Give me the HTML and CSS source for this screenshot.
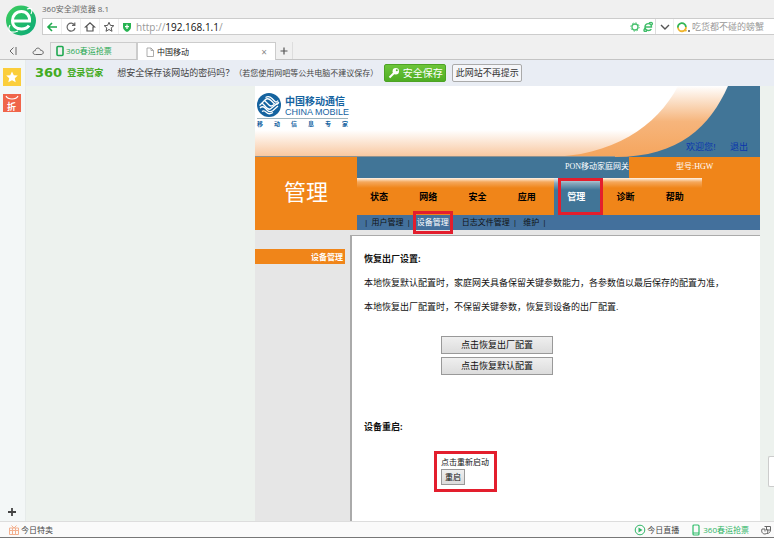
FILE: index.html
```
<!DOCTYPE html>
<html lang="zh-CN">
<head>
<meta charset="utf-8">
<title>中国移动</title>
<link rel="stylesheet" href="styles.css">
</head>
<body>
<header class="chrome">
  <svg class="brand" viewBox="0 0 42 42" aria-hidden="true">
    <defs><linearGradient id="g" x1="0" y1="0" x2="1" y2="1"><stop offset="0" stop-color="#3fcf5c"/><stop offset="1" stop-color="#08a878"/></linearGradient></defs>
    <circle cx="21" cy="20.500" r="15" fill="url(#g)"/>
    <path d="M13 21H29.500C30 15.500 26.500 11.500 21.500 11.500C16 11.500 12.500 15.500 12.500 20.500C12.500 26 16.500 29 21.500 29C25 29 27.500 28 29 25.500" fill="none" stroke="#fff" stroke-width="3"/>
    <path d="M10 25C7 31 10 34 18 31M27 9C32 7 33 10 31 14" fill="none" stroke="#fff" stroke-width="1.200"/>
  </svg>
  <div class="chrome-main">
    <div class="app-title">360安全浏览器 8.1</div>
    <div class="address">
      <button class="tool" aria-label="后退"><svg viewBox="0 0 12 12"><path d="M11 6H2M6 2L2 6L6 10" stroke="#1ea94c" stroke-width="1.600"/></svg></button>
      <button class="tool" aria-label="刷新"><svg viewBox="0 0 12 12"><path d="M9.500 4A4 4 0 1 0 10 7M9.800 1.500V4.300H7" stroke="#666" stroke-width="1.200"/></svg></button>
      <button class="tool" aria-label="主页"><svg viewBox="0 0 12 12"><path d="M1.500 6L6 1.800L10.500 6H9V10H3V6Z" stroke="#555" stroke-width="1.200"/></svg></button>
      <button class="tool" aria-label="收藏"><svg viewBox="0 0 12 12"><path d="M6 1.300L7.400 4.400L10.800 4.700L8.200 6.900L9 10.300L6 8.500L3 10.300L3.800 6.900L1.200 4.700L4.600 4.400Z" stroke="#555"/></svg></button>
      <svg class="shield" viewBox="0 0 12 12"><path d="M2 2H10V6C10 8.500 8 10 6 11C4 10 2 8.500 2 6Z" fill="#27b351"/><path d="M6 3.500V8M4 5.700H8" stroke="#fff" stroke-width="1.200"/></svg>
      <div class="url">http://<b>192.168.1.1</b>/</div>
      <svg class="mini" viewBox="0 0 12 12"><circle cx="6" cy="6" r="3" stroke="#45c06c" stroke-width="1.300"/><circle cx="6" cy="6" r="4.200" stroke="#45c06c" stroke-dasharray="1.300 2"/></svg>
      <svg class="mini" viewBox="0 0 12 12"><path d="M3 6H9.500C9.500 1.500 3 1.500 3 6C3 10 8 10.300 9.300 8M7 2C10 0.500 11 2 10 4M3 7C1 10 2 11 5 10" stroke="#3fbd68" stroke-width="1.400"/></svg>
      <button class="tool drop" aria-label="展开"><svg viewBox="0 0 12 12"><path d="M2 4L6 8L10 4" stroke="#555" stroke-width="1.400"/></svg></button>
      <svg class="engine" viewBox="0 0 14 12"><path d="M2 7A4 4 0 1 1 9.900 6" stroke="#34b556" stroke-width="1.800"/><path d="M2 6.500A4 4 0 0 0 10 6M8 8.500L10.500 10" stroke="#f0b52c" stroke-width="1.800"/><circle cx="13" cy="10" r="1" fill="#555"/></svg>
      <input class="search" aria-label="搜索" placeholder="吃货都不碰的螃蟹">
    </div>
  </div>
</header>
<nav class="tabs" aria-label="标签页">
  <button class="tab-tool" aria-label="恢复"><svg viewBox="0 0 12 12"><path d="M6.500 2.500L3 6L6.500 9.500M9 2V10" stroke="#666"/></svg></button>
  <button class="tab-tool cloud" aria-label="云"><svg viewBox="0 0 12 12"><path d="M3.500 9.500C0 9.500 0.500 5.500 3.200 5.800C3.500 2.300 8 2.300 8.500 5.300C12 5 12.200 9.500 9 9.500Z" stroke="#666"/></svg></button>
  <a class="tab" href="#ticket"><svg viewBox="0 0 8 12"><rect x="1" y="1.500" width="6" height="9" rx="1" stroke="#1fa850" stroke-width="1.600"/></svg>360春运抢票</a>
  <a class="tab current" href="#page"><svg viewBox="0 0 8 12"><path d="M1 2H5L7.500 4.500V10.500H1ZM5 2V4.500H7.500" stroke="#999" stroke-width=".8"/></svg><span>中国移动</span><span class="close">×</span></a>
  <button class="tab-tool add" aria-label="新标签页"><svg viewBox="0 0 12 12"><path d="M6 2.500V9.500M2.500 6H9.500" stroke="#555" stroke-width="1.200"/></svg></button>
</nav>
<div class="workspace">
  <aside class="dock">
    <button class="dock-btn star" aria-label="收藏夹"><svg viewBox="0 0 18 18"><path d="M9 3.500L10.800 7.200L14.800 7.600L11.800 10.300L12.700 14.300L9 12.200L5.300 14.300L6.200 10.300L3.200 7.600L7.200 7.200Z" fill="#fff"/></svg></button>
    <button class="dock-btn deal"><svg viewBox="0 0 18 6"><path d="M3 1C5 5 13 5 15 1" stroke="#fff" stroke-width="1.200"/></svg><span>折</span></button>
    <button class="dock-add" aria-label="添加"><svg viewBox="0 0 12 12"><path d="M6 2V10M2 6H10" stroke="#444" stroke-width="1.800"/></svg></button>
  </aside>
  <main class="viewport" id="page">
    <div class="infobar">
      <span class="wordmark">360</span><strong class="keeper">登录管家</strong>
      <span class="question">想安全保存该网站的密码吗？</span><span class="note">（若您使用网吧等公共电脑不建议保存）</span>
      <button class="save"><svg viewBox="0 0 12 12"><path d="M1.500 10.500L6 6" stroke="#fff" stroke-width="2"/><circle cx="7.800" cy="4.200" r="3.200" fill="#fff"/><circle cx="8.800" cy="3.200" r="1" fill="#56b52c"/></svg>安全保存</button>
      <button class="never">此网站不再提示</button>
    </div>
    <div class="canvas">
      <div class="site">
        <div class="banner">
          <svg class="swoosh" viewBox="0 0 505 71" preserveAspectRatio="none" aria-hidden="true">
            <defs>
              <linearGradient id="o" x1="0" y1="0" x2="0" y2="1"><stop offset="0" stop-color="#fff"/><stop offset=".5" stop-color="#f6b57c"/><stop offset="1" stop-color="#f5a55d"/></linearGradient>
              <linearGradient id="w" x1="0" y1="0" x2="0" y2="1"><stop offset="0" stop-color="#fff"/><stop offset=".62" stop-color="#fff"/><stop offset="1" stop-color="#f8c69d"/></linearGradient>
            </defs>
            <path d="M0 0H505V71H0Z" fill="#417597"/>
            <path d="M0 0H473C455 40 425 71 360 71H0Z" fill="url(#o)"/>
            <path d="M0 0H423C402 40 358 71 290 71H0Z" fill="url(#w)"/>
            <path d="M0 70.500H360" stroke="#8f9290"/>
          </svg>
          <div class="logo">
            <div class="logo-top">
              <svg viewBox="0 0 24 24" aria-hidden="true"><circle cx="12" cy="12" r="12" fill="#14639f"/><g stroke="#fff" stroke-width="1.300"><path d="M2.500 12.500L8 7C10 5 12 5.500 14 7.500L17 10.500C18.500 12 20 11.500 21.500 10"/><path d="M5 10L7.500 12.500C9.500 15 11.500 17.500 14 15.500L22 9"/><path d="M7.500 7.500L12 12C14 14 15.500 13 17 11.500M3 15C5 13 6.500 13.500 8 15L10.500 17.500C12.500 19.500 14 19 16 17.500L21 13M8.500 4.500C11 3 13.500 4 15 5.500L18 8.500C19 9.500 20 9 21 7.500M5 18.500C7 17 8 18 9.500 19.500C11 21 13.500 21 16 19.500"/></g></svg>
              <div><div class="logo-cn">中国移动通信</div><div class="logo-en">CHINA MOBILE</div></div>
            </div>
            <div class="slogan"><span>移</span><span>动</span><span>信</span><span>息</span><span>专</span><span>家</span></div>
          </div>
          <div class="session"><a href="#welcome">欢迎您!</a><a href="#logout">退出</a></div>
        </div>
        <div class="masthead">
          <h1>管理</h1>
          <div class="menus">
            <div class="device"><span class="name">PON移动家庭网关</span><span class="model">型号:HGW</span></div>
            <nav class="menu"><a href="#s">状态</a><a href="#n">网络</a><a href="#f">安全</a><a href="#a">应用</a><a class="on" href="#m">管理</a><a href="#d">诊断</a><a href="#h">帮助</a></nav>
            <nav class="submenu"><a href="#u">用户管理</a><a class="on" href="#e">设备管理</a><a href="#l">日志文件管理</a><a href="#w">维护</a></nav>
          </div>
        </div>
        <div class="content">
          <aside class="side"><a href="#e">设备管理</a></aside>
          <section class="panel">
            <h2>恢复出厂设置:</h2>
            <p>本地恢复默认配置时，家庭网关具备保留关键参数能力，各参数值以最后保存的配置为准，</p>
            <p>本地恢复出厂配置时，不保留关键参数，恢复到设备的出厂配置.</p>
            <div class="actions"><button>点击恢复出厂配置</button><button>点击恢复默认配置</button></div>
            <h2>设备重启:</h2>
            <div class="restart"><label for="reboot">点击重新启动</label><button id="reboot">重启</button></div>
          </section>
        </div>
      </div>
      <div class="float-tab"></div>
    </div>
  </main>
</div>
<footer class="status">
  <a href="#sale"><svg viewBox="0 0 12 12"><path d="M1.500 4H10.500V10.500H1.500ZM1.500 6.500H10.500M4.500 4V10.500M7.500 4V10.500M6 4L3.500 1.500M6 4L8.500 1.500" stroke="#f3b08f"/></svg>今日特卖</a>
  <a class="live" href="#live"><svg viewBox="0 0 12 12"><circle cx="6" cy="6" r="4.800" stroke="#2fb566"/><path d="M4.500 3.500L8.500 6L4.500 8.500Z" fill="#2fb566"/></svg>今日直播</a>
  <a class="green" href="#ticket"><svg viewBox="0 0 12 12"><rect x="3" y="1" width="6" height="10" rx="1" stroke="#2fbd6a" stroke-width="1.200"/><path d="M3 9H9" stroke="#2fbd6a"/></svg>360春运抢票</a>
  <a href="#boost" aria-label="加速"><svg viewBox="0 0 12 12"><path d="M4.500 2.500H10.500V6C10.500 8 9 9.500 7 9.500M2 5C1 8 2.500 10 5 10C7.500 10 8.500 7.500 7.500 5.500M2 5H5V7.500M6.500 2.500V6H10" stroke="#666"/></svg></a>
</footer>
</body>
</html>
```
FILE: styles.css
```
* { box-sizing: border-box; }
body {
  margin: 0;
  min-height: 100vh;
  display: flex;
  flex-direction: column;
  background: #f0f0f0;
  color: #444;
  font: 8px/12px "Open Sans", "Noto Sans CJK SC", sans-serif;
}
svg { display: block; fill: none; width: 12px; height: 12px; flex: none; }
button { font: inherit; color: inherit; padding: 0; margin: 0; border: 0; background: none; }
a { color: inherit; text-decoration: none; }

.chrome { display: flex; height: 42px; }
.brand { width: 42px; height: 42px; }
.chrome-main { flex: 1; display: flex; flex-direction: column; }
.app-title { height: 18px; line-height: 17px; color: #666; }
.address {
  display: flex;
  align-items: center;
  height: 17px;
  background: #fff;
  border: 1px solid #ccc;
  border-right: 0;
}
.tool { width: 19px; height: 15px; display: grid; place-items: center; border-right: 1px solid #eee; }
.shield { margin-left: 2px; }
.url { flex: 1; margin-left: 3px; font-size: 10px; color: #999; }
.url b { font-weight: 400; color: #111; }
.mini { margin-right: 1px; }
.drop { border-left: 1px solid #ddd; }
.engine { width: 14px; margin: 0 2px; }
.search { width: 82px; border: 0; padding: 0; outline: 0; background: none; font: inherit; font-size: 9px; }
.search::placeholder { color: #999; opacity: 1; }

.tabs { display: flex; height: 18px; border-bottom: 1px solid #c4c4c4; }
.tab-tool { width: 26px; display: grid; place-items: center; }
.cloud { width: 24px; }
.tab {
  width: 87px;
  display: flex;
  align-items: center;
  gap: 2px;
  padding: 0 5px;
  color: #1fa850;
  border: 1px solid #ccc;
  border-bottom: 0;
}
.tab svg { width: 8px; }
.tab.current { width: 139px; height: 18px; gap: 3px; padding: 0 8px; background: #fff; color: #222; }
.close { margin-left: auto; color: #888; font-size: 10px; }
.add { width: 17px; border-right: 1px solid #ddd; }

.workspace { flex: 1; display: flex; }
.dock {
  width: 26px;
  display: flex;
  flex-direction: column;
  align-items: center;
  gap: 8px;
  padding: 8px 2px 3px 0;
  background: #f3f7f7;
  border-right: 1px solid #e6ebea;
}
.dock-btn { width: 18px; height: 18px; }
.star { background: #fbce3b; }
.star svg { width: 18px; height: 18px; }
.deal { background: #f0654a; color: #fff; font-size: 9px; line-height: 11px; font-weight: 700; }
.deal svg { width: 18px; height: 6px; }
.deal span { display: block; }
.dock-add { margin-top: auto; }
.viewport { flex: 1; display: flex; flex-direction: column; min-width: 0; }

.infobar {
  display: flex;
  align-items: center;
  height: 26px;
  padding-left: 9px;
  background: #e9edf4;
  white-space: nowrap;
}
.wordmark { font: bold 13px/16px "DejaVu Sans", sans-serif; color: #43ab22; }
.keeper { margin: 0 14px 0 5px; font-size: 9px; color: #43ab22; }
.question { font-size: 9px; }
.save, .never { height: 18px; border-radius: 2px; }
.save {
  display: flex;
  align-items: center;
  justify-content: center;
  gap: 3px;
  width: 62px;
  margin: 0 6px;
  color: #fff;
  font-size: 10px;
  background: linear-gradient(#6cc53a, #4fae24);
  border: 1px solid #4da325;
}
.never { width: 70px; font-size: 9px; color: #333; background: #f5f6f9; border: 1px solid #aaa; }

.canvas { flex: 1; display: flex; position: relative; padding: 0 14px 0 229px; background: #edf2ee; }
.site { flex: 1; display: flex; flex-direction: column; background: #e6e6e6; }
.banner { position: relative; display: flex; justify-content: space-between; height: 71px; }
.swoosh { position: absolute; inset: 0; width: 100%; height: 100%; }
.logo { position: relative; width: 93px; padding: 7px 0 0 2px; color: #14639f; }
.logo-top { display: flex; gap: 4px; padding-bottom: 1px; border-bottom: 1px solid #9db4bd; }
.logo-top svg { width: 24px; height: 24px; }
.logo-cn { font: bold 10px/15px "Noto Sans CJK SC", sans-serif; white-space: nowrap; }
.logo-en { font: 9px/9px "Liberation Sans", sans-serif; white-space: nowrap; }
.slogan { display: flex; justify-content: space-between; font-size: 6px; line-height: 11px; font-weight: 700; }
.session {
  position: relative;
  align-self: flex-end;
  display: flex;
  gap: 14px;
  padding: 0 12px 4px 0;
  color: #0b35ad;
  font: 9px/12px "Liberation Serif", "Noto Sans CJK SC", serif;
}

.masthead { display: flex; background: #f08519; }
.masthead h1 {
  width: 102px;
  margin: 0;
  text-align: center;
  color: #fff;
  font: 400 22px/71px "Liberation Serif", "Noto Sans CJK SC", serif;
}
.menus { flex: 1; }
.device {
  display: flex;
  height: 21px;
  line-height: 20px;
  color: #fff;
  font-family: "Liberation Serif", "Noto Sans CJK SC", serif;
}
.device .name { flex: 1; text-align: right; background: #417597; }
.device .model { width: 131px; padding-left: 47px; }
.menu { display: flex; height: 37px; margin-right: 58px; }
.menu a {
  flex: 1;
  padding-left: 13px;
  color: #000;
  font-size: 9px;
  font-weight: 700;
  line-height: 37px;
  background: linear-gradient(#fff3e6, #f5a85c 4px, #f08519 10px);
}
.menu .on { position: relative; color: #fff; background: linear-gradient(#e9eef2, #8aa9bd 5px, #417597 12px); }
.menu .on::after {
  content: "";
  position: absolute;
  inset: 0 0 0 4px;
  border: 3px solid #e31e2d;
}
.submenu { display: flex; height: 15px; padding-left: 7px; background: #43709c; color: #111; line-height: 13px; }
.submenu a { padding-left: 6px; position: relative; }
.submenu a::after { content: "|"; margin-left: 3px; }
.submenu a:first-child { padding-left: 0; }
.submenu a:first-child::before { content: "|"; margin-right: 3px; }
.submenu .on { padding-right: 7px; color: #fff; }
.submenu .on::after {
  content: "";
  position: absolute;
  inset: -4px 3px -4px 2px;
  margin: 0;
  border: 3px solid #e31e2d;
}

.content { flex: 1; display: flex; }
.side { width: 95px; padding: 19px 5px 0 0; }
.side a {
  display: block;
  padding-right: 2px;
  background: #f08519;
  color: #fff;
  font-weight: 700;
  line-height: 15px;
  text-align: right;
}
.panel {
  flex: 1;
  margin-top: 5px;
  padding: 17px 12px 27px;
  background: #fff;
  border-top: 1px solid #aaa;
  border-left: 2px solid #aaa;
  color: #111;
}
.panel h2 { margin: 0; font-size: 9px; line-height: 12px; }
.panel p { margin: 12px 0; font-size: 9px; line-height: 12px; white-space: nowrap; }
.actions { display: flex; flex-direction: column; gap: 3px; width: 112px; margin: 23px 0 46px 77px; }
.panel button { height: 18px; border: 1px solid #999; background: linear-gradient(#efefef, #dcdcdc); font-size: 9px; line-height: 14px; }
.restart {
  display: flex;
  flex-direction: column;
  align-items: flex-start;
  width: 63px;
  margin: 18px 0 0 70px;
  padding: 2px 4px 4px;
  border: 3px solid #e31e2d;
}
.panel .restart button { width: 24px; height: 16px; margin-top: 1px; font-size: 8px; }
.float-tab {
  position: absolute;
  right: 0;
  bottom: 34px;
  width: 6px;
  height: 31px;
  background: #fff;
  border: 1px solid #ccc;
  border-right: 0;
  border-radius: 2px 0 0 2px;
}

.status {
  display: flex;
  align-items: center;
  gap: 11px;
  height: 17px;
  padding: 0 2px 0 8px;
  background: #fafafa;
  border-top: 1px solid #ddd;
  border-bottom: 1px solid #777;
}
.status a { display: flex; align-items: center; gap: 1px; }
.status .live { margin-left: auto; }
.green { color: #2fb566; }
```
